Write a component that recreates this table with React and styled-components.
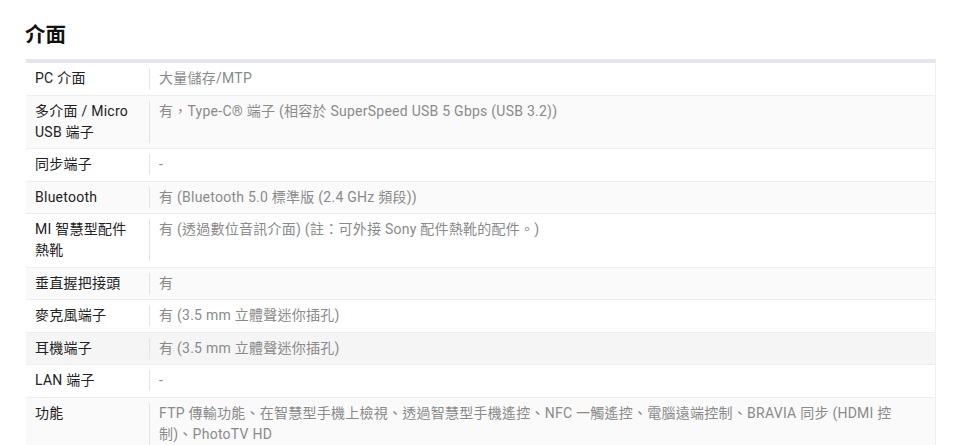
import React from "react";
import styled, { createGlobalStyle } from "styled-components";

const Global = createGlobalStyle`
  html, body { margin: 0; padding: 0; background: #fff; }
  body { font-family: Roboto, "Noto Sans CJK TC", sans-serif; }
`;

const Page = styled.div`
  padding: 21px 25px 0 26px;
  width: 960px;
  box-sizing: border-box;
  font-family: Roboto, "Noto Sans CJK TC", sans-serif;
`;

const Title = styled.h2`
  margin: 0 0 10px -1px;
  font-size: 20.5px;
  line-height: 28px;
  font-weight: 700;
  color: #111;
`;

const Table = styled.div`
  width: 909px;
  border-top: 4px solid #e6e6ee;
  border-right: 1px solid #f0f0f0;
`;

const Row = styled.div`
  display: grid;
  grid-template-columns: 123px 1fr;
  padding: 5.25px 0;
  border-bottom: 1px solid #eeeeee;
  background: ${(p) => (p.$shade === 2 ? "#f5f5f5" : p.$shade === 1 ? "#fafafa" : "#fff")};
  font-size: 14px;
  line-height: 21px;
  letter-spacing: 0.25px;
`;

const Label = styled.div`
  padding: 0 14px 0 9px;
  color: #222;
`;

const Value = styled.div`
  border-left: 1px solid #e4e4e4;
  padding: 0 10px 0 9px;
  color: #8a8a8a;
`;

const rows = [
  ["PC 介面", "大量儲存/MTP"],
  ["多介面 / Micro USB 端子", "有，Type-C® 端子 (相容於 SuperSpeed USB 5 Gbps (USB 3.2))"],
  ["同步端子", "-"],
  ["Bluetooth", "有 (Bluetooth 5.0 標準版 (2.4 GHz 頻段))"],
  ["MI 智慧型配件熱靴", "有 (透過數位音訊介面) (註：可外接 Sony 配件熱靴的配件。)"],
  ["垂直握把接頭", "有"],
  ["麥克風端子", "有 (3.5 mm 立體聲迷你插孔)"],
  ["耳機端子", "有 (3.5 mm 立體聲迷你插孔)"],
  ["LAN 端子", "-"],
  ["功能", "FTP 傳輸功能、在智慧型手機上檢視、透過智慧型手機遙控、NFC 一觸遙控、電腦遠端控制、BRAVIA 同步 (HDMI 控制)、PhotoTV HD"],
];

export default function App() {
  return (
    <Page lang="zh-Hant-TW">
      <Global />
      <Title>介面</Title>
      <Table>
        {rows.map(([k, v], i) => (
          <Row key={k} $shade={i === 7 ? 2 : i % 2 === 1 ? 1 : 0}>
            <Label>{k}</Label>
            <Value>{v}</Value>
          </Row>
        ))}
      </Table>
    </Page>
  );
}
